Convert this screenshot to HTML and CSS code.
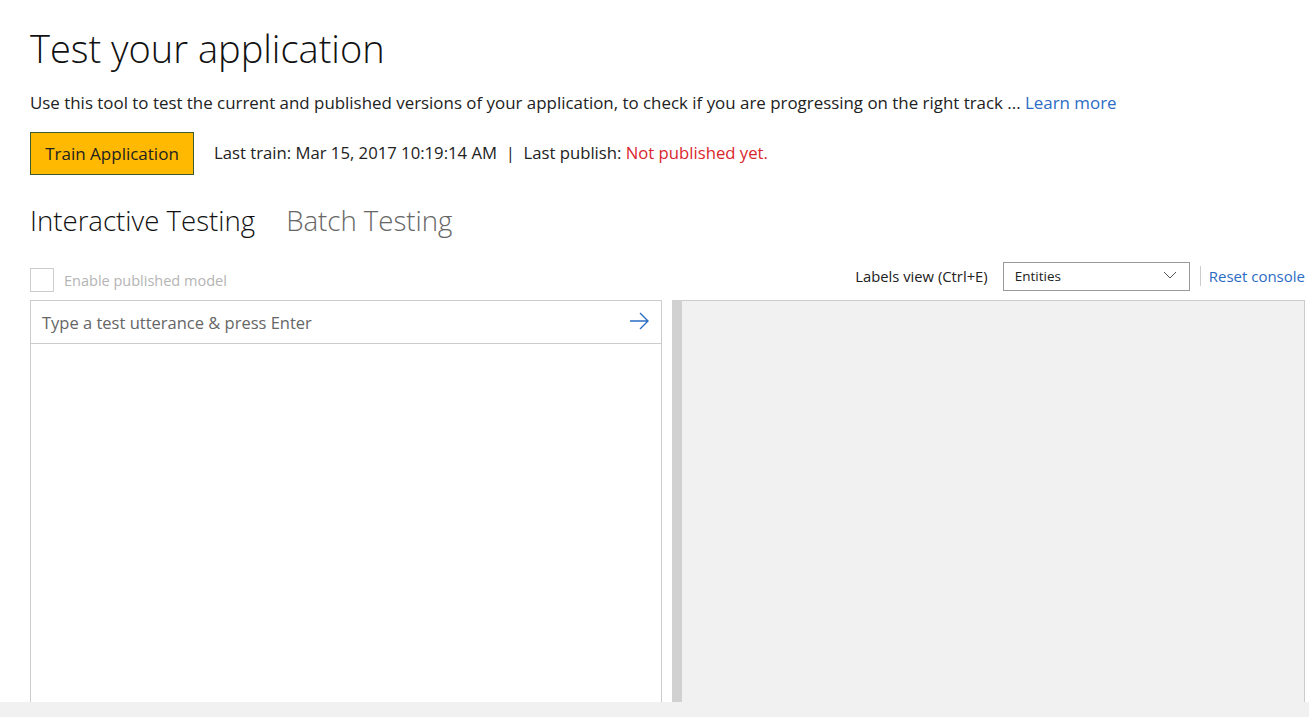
FILE: index.html
```html
<!DOCTYPE html>
<html>
<head>
<meta charset="utf-8">
<link rel="stylesheet" href="styles.css">
</head>
<body>
<div class="page">
  <h1 class="title">Test your application</h1>
  <p class="desc">Use this tool to test the current and published versions of your application, to check if you are progressing on the right track ... <a class="link" href="#">Learn more</a></p>
  <div class="train-row">
    <button class="train-btn">Train Application</button>
    <span class="train-info">Last train: Mar 15, 2017 10:19:14 AM &nbsp;|&nbsp; Last publish: <span class="warn">Not published yet.</span></span>
  </div>
  <div class="tabs">
    <span class="tab active">Interactive Testing</span>
    <span class="tab">Batch Testing</span>
  </div>
  <div class="toolbar">
    <label class="check">
      <span class="box"></span>
      <span class="check-label">Enable published model</span>
    </label>
    <div class="tools-right">
      <span class="labels-view">Labels view (Ctrl+E)</span>
      <div class="select">
        <span>Entities</span>
        <svg class="chev" width="14" height="8" viewBox="0 0 14 8"><path d="M1 1 L7 7 L13 1" fill="none" stroke="#555" stroke-width="1"/></svg>
      </div>
      <span class="sep"></span>
      <a class="link reset" href="#">Reset console</a>
    </div>
  </div>
  <div class="panes">
    <div class="left-pane">
      <div class="input-row">
        <span class="placeholder">Type a test utterance &amp; press Enter</span>
        <svg class="arrow" width="20" height="18" viewBox="0 0 20 18"><path d="M1 9 H19 M11 1 L19 9 L11 17" fill="none" stroke="#2b6cc4" stroke-width="1.4"/></svg>
      </div>
    </div>
    <div class="splitter"></div>
    <div class="right-pane"></div>
  </div>
</div>
<div class="hscroll"></div>
</body>
</html>
```
FILE: styles.css
```css
html, body {
  margin: 0;
  padding: 0;
  height: 100%;
  overflow: hidden;
  background: #fff;
}
body {
  font-family: "Open Sans", "Noto Sans", sans-serif;
  color: #222;
  display: flex;
  flex-direction: column;
}
.page {
  flex: 1;
  min-height: 0;
  padding: 0 4px 0 30px;
  display: flex;
  flex-direction: column;
}
.title {
  margin: 22px 0 0 0;
  font-weight: 300;
  font-size: 38px;
  line-height: 52px;
  color: #111;
  letter-spacing: 0;
}
.desc {
  margin: 18px 0 0 0;
  font-size: 16.9px;
  line-height: 22px;
  color: #222;
}
.link {
  color: #2b6cc4;
  text-decoration: none;
}
.train-row {
  margin-top: 18px;
  display: flex;
  align-items: center;
}
.train-btn {
  width: 164px;
  height: 43px;
  background: #ffb900;
  border: 1px solid #3e5a33;
  font-family: inherit;
  font-size: 17px;
  color: #222;
  padding: 0;
}
.train-info {
  margin-left: 20px;
  margin-top: -3px;
  font-size: 16.7px;
  color: #222;
}
.warn {
  color: #d9262c;
}
.tabs {
  margin-top: 27px;
  display: flex;
  gap: 31px;
}
.tab {
  font-size: 27.6px;
  font-weight: 300;
  color: #666;
  line-height: 36px;
}
.tab.active {
  color: #111;
}
.toolbar {
  margin-top: 24px;
  display: flex;
  justify-content: space-between;
  align-items: center;
  height: 28px;
  padding-bottom: 10px;
}
.check {
  display: flex;
  align-items: center;
  gap: 10px;
  margin-top: 8px;
}
.box {
  width: 22px;
  height: 22px;
  border: 1px solid #ccc;
}
.check-label {
  font-size: 14.5px;
  color: #b4b4b4;
}
.tools-right {
  display: flex;
  align-items: center;
}
.labels-view {
  font-size: 14.8px;
  color: #222;
  margin-right: 15px;
}
.select {
  width: 162px;
  height: 27px;
  border: 1px solid #999;
  display: flex;
  align-items: center;
  justify-content: space-between;
  padding: 0 12px 0 11px;
  font-size: 13.5px;
  color: #222;
  margin-right: 10px;
}
.chev {
  margin-top: -2px;
}
.sep {
  width: 1px;
  height: 20px;
  background: #ccc;
  margin-right: 8px;
}
.reset {
  font-size: 15px;
}
.panes {
  flex: 1;
  min-height: 0;
  display: flex;
}
.left-pane {
  width: 630px;
  border: 1px solid #ccc;
  border-bottom: none;
  background: #fff;
}
.input-row {
  height: 42px;
  border-bottom: 1px solid #ccc;
  display: flex;
  align-items: center;
  justify-content: space-between;
  padding: 0 12px 0 11px;
}
.placeholder {
  font-size: 16.5px;
  color: #666;
}
.arrow {
  margin-top: -2px;
}
.splitter {
  width: 10px;
  margin-left: 10px;
  background: #d1d1d1;
}
.right-pane {
  flex: 1;
  background: #f1f1f1;
  border-top: 1px solid #ccc;
  border-right: 1px solid #ccc;
}
.hscroll {
  height: 15px;
  background: #f1f1f1;
  flex-shrink: 0;
}
```
